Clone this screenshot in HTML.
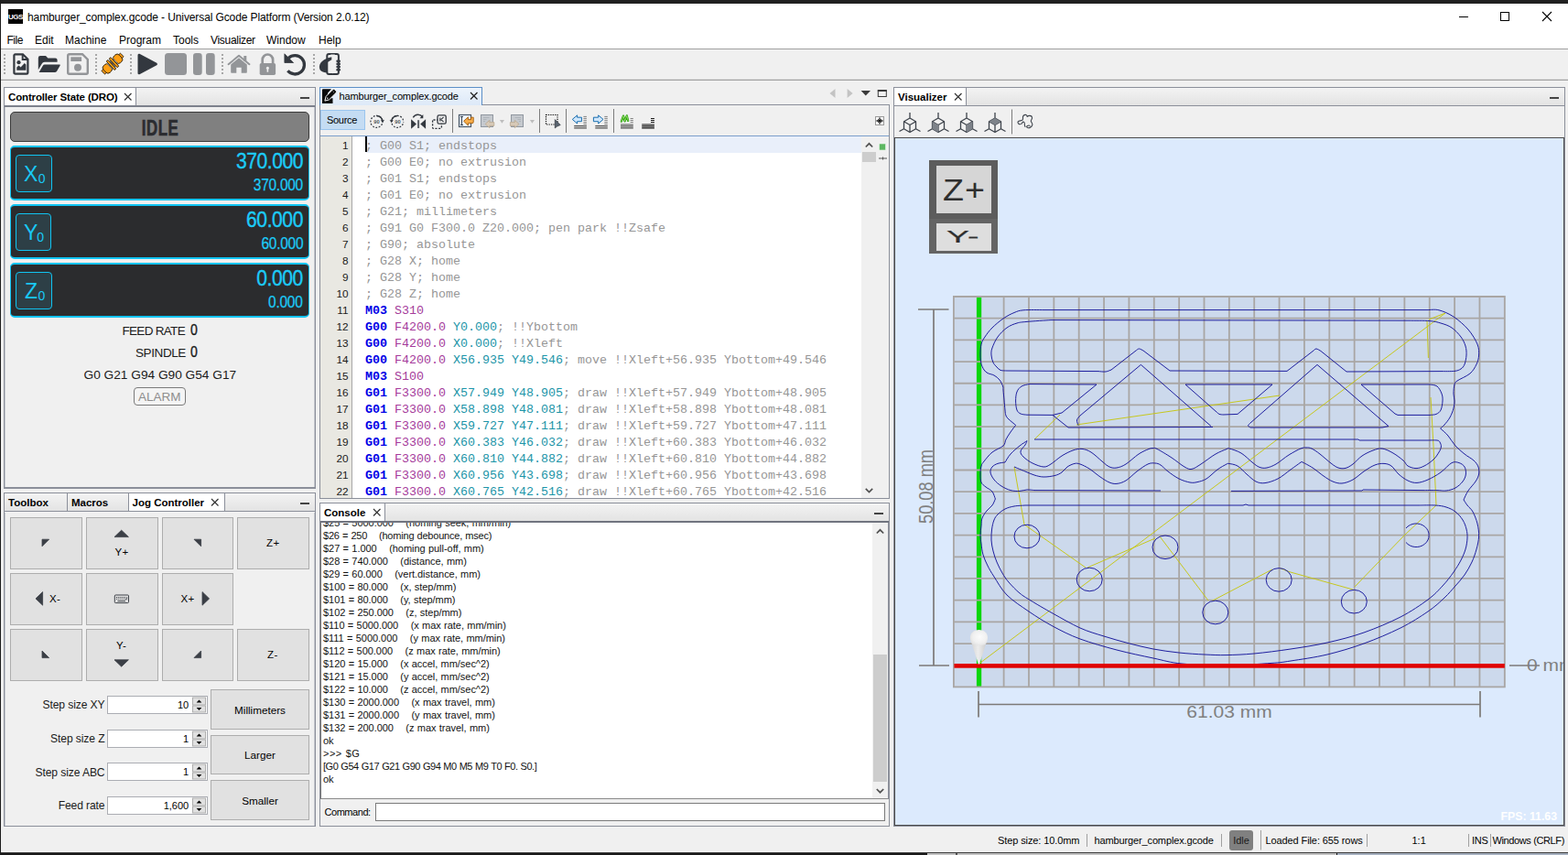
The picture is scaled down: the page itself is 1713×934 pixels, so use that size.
<!DOCTYPE html>
<html lang="en">
<head>
<meta charset="utf-8">
<title>hamburger_complex.gcode - Universal Gcode Platform (Version 2.0.12)</title>
<style>
*{box-sizing:border-box;margin:0;padding:0}
html,body{width:1713px;height:934px;overflow:hidden;background:#f0f0f0}
body{position:relative;font-family:"Liberation Sans",sans-serif;font-size:12px;color:#000}
.a{position:absolute}
.t{position:absolute;white-space:pre;line-height:1}
svg{position:absolute;overflow:visible}
.ui{font-family:"Liberation Sans",sans-serif;font-size:12px}
.bold{font-weight:bold}
.panel{position:absolute;border:1px solid #8b8f9a}
.tabstrip{position:absolute;background:linear-gradient(#f3f3f3,#e3e3e3);border-bottom:2px solid #7d818c}
.tab{position:absolute;top:0;bottom:0;background:#fff;border-right:1px solid #8b8f9a}
.tabi{position:absolute;top:0;bottom:0;border-right:1px solid #8b8f9a}
.btn{position:absolute;background:#e1e1e1;border:1px solid #adadad}
.spin{position:absolute;background:#fff;border:1px solid #abadb3}
.mono{font-family:"Liberation Mono",monospace;font-size:13.33px}
.c{color:#969696}.g{color:#0000e6;font-weight:bold}.f{color:#a53b9b}.x{color:#1c95a8}
.ln{position:absolute;left:0;width:33px;text-align:right;font-size:13px;color:#1a1a1a}
</style>
</head>
<body>
<!-- window chrome -->
<div class="a" style="left:0;top:0;width:1713px;height:4px;background:#212121"></div>
<div class="a" style="left:0;top:931px;width:1713px;height:3px;background:#1a1a1a"></div>
<div class="a" style="left:1013px;top:932px;width:447px;height:2px;background:#c2c2c2"></div>
<div class="a" style="left:1044px;top:932px;width:2px;height:2px;background:#555"></div>
<div class="a" style="left:1461px;top:932px;width:252px;height:2px;background:#a6b0c0"></div>
<div class="a" style="left:0;top:931px;width:1713px;height:1px;background:#3c3c3c"></div>
<div class="a" style="left:0;top:0;width:1px;height:934px;background:#1c1c1c"></div>
<div class="a" style="left:1px;top:4px;width:1712px;height:49px;background:#fff"></div>
<div class="a" style="left:1px;top:53px;width:1712px;height:1px;background:#a0a0a0"></div>
<div class="a" style="left:1px;top:86px;width:1712px;height:1px;background:#dcdcdc"></div>
<div class="a" style="left:1px;top:87px;width:1712px;height:1px;background:#a0a0a0"></div>
<!-- app icon -->
<div class="a" style="left:9px;top:10px;width:16px;height:16px;background:#000"></div>
<div class="t bold" style="left:9px;top:14.500px;width:16px;text-align:center;font-size:8px;color:#fff;letter-spacing:-0.500px">UGS</div>
<div class="t" id="title" style="left:30px;top:13px;font-size:12px;letter-spacing:-0.11px">hamburger_complex.gcode - Universal Gcode Platform (Version 2.0.12)</div>
<!-- window buttons -->
<svg style="left:1590px;top:10px" width="120" height="20" viewBox="0 0 120 20">
<path d="M4 8.5h10" stroke="#000" stroke-width="1" fill="none"/>
<rect x="49.5" y="3.5" width="9" height="9" stroke="#000" stroke-width="1" fill="none"/>
<path d="M95 3l10 10M105 3l-10 10" stroke="#000" stroke-width="1.1" fill="none"/>
</svg>
<!-- menu -->
<div class="t" style="left:7.500px;top:38px;font-size:12px;letter-spacing:-0.500px" id="m1">File</div>
<div class="t" style="left:38px;top:38px;font-size:12px" id="m2">Edit</div>
<div class="t" style="left:71px;top:38px;font-size:12px" id="m3">Machine</div>
<div class="t" style="left:130px;top:38px;font-size:12px" id="m4">Program</div>
<div class="t" style="left:189px;top:38px;font-size:12px" id="m5">Tools</div>
<div class="t" style="left:230px;top:38px;font-size:12px;letter-spacing:-0.3px" id="m6">Visualizer</div>
<div class="t" style="left:291px;top:38px;font-size:12px" id="m7">Window</div>
<div class="t" style="left:348px;top:38px;font-size:12px" id="m8">Help</div>
<!-- main toolbar -->
<svg style="left:0;top:54px" width="400" height="33" viewBox="0 54 400 33">
<defs><g id="hd"><rect x="0" y="59" width="2" height="2"/><rect x="0" y="63" width="2" height="2"/><rect x="0" y="67" width="2" height="2"/><rect x="0" y="71" width="2" height="2"/><rect x="0" y="75" width="2" height="2"/><rect x="0" y="79" width="2" height="2"/></g></defs>
<use href="#hd" x="4" fill="#a8a8a8"/><use href="#hd" x="104" fill="#a8a8a8"/><use href="#hd" x="142" fill="#a8a8a8"/><use href="#hd" x="242" fill="#a8a8a8"/><use href="#hd" x="342" fill="#a8a8a8"/>
<!-- file image -->
<g transform="translate(14.3 58.2)" fill="#33383f" stroke="none">
<path d="M3.3 1.1h8.2l5.5 5.5v14.6a1.3 1.3 0 0 1-1.3 1.3H3.3A1.3 1.3 0 0 1 2 21.2V2.4a1.3 1.3 0 0 1 1.3-1.3z" fill="none" stroke="#33383f" stroke-width="2.2" transform="translate(-0.9 0)"/>
<path d="M10.4 1.2v5.6h5.6" fill="none" stroke="#33383f" stroke-width="2"/>
<circle cx="6.2" cy="10" r="2.1"/>
<path d="M4 18.6v-3.2l2.2-2.2 2.1 2.1 4.2-4.6 1.6 1.6v6.3z"/>
</g>
<!-- folder open -->
<g transform="translate(41.8 61)" fill="#33383f">
<path d="M2.2 0h6l2.4 2.4h8a2.2 2.2 0 0 1 2.2 2.2v2.2H6.9a3.3 3.3 0 0 0-2.9 1.7L0 15.3V2.2A2.2 2.2 0 0 1 2.200 0z"/>
<path d="M23.9 10.6l-3.600 6.100a2.800 2.800 0 0 1-2.400 1.400H0.800l4.200-7.400a2.400 2.400 0 0 1 2.100-1.200h16a0.800 0.800 0 0 1 0.800 1.100z"/>
</g>
<!-- save (disabled) -->
<g transform="translate(73 58)" fill="#939598">
<path d="M2.700 1.200h14.300l5.800 5.800v14.300a1.500 1.500 0 0 1-1.500 1.500H2.700a1.500 1.500 0 0 1-1.500-1.500V2.700a1.500 1.500 0 0 1 1.500-1.500z" fill="none" stroke="#939598" stroke-width="2.400"/>
<rect x="4.300" y="4.300" width="11.800" height="4.700"/>
<circle cx="12" cy="15.800" r="4"/>
</g>
<!-- connect (orange plug) -->
<g transform="translate(123 69.600) rotate(-43)">
<g fill="#ff9f14" stroke="#2a2010" stroke-width="0.900" stroke-linejoin="round">
<rect x="-14.100" y="-2.600" width="5.500" height="5.200" rx="0.500"/>
<rect x="8.600" y="-2.600" width="5.500" height="5.200" rx="0.500"/>
<rect x="-11.800" y="-5.100" width="8" height="10.200" rx="3.200"/>
<rect x="3.800" y="-5.100" width="8" height="10.200" rx="3.200"/>
<rect x="-4.600" y="-4.300" width="9.200" height="8.600" fill="#4a4a4a" stroke="none"/>
<path d="M-4.100 -4.600v9.200M0 -5v10M4.100 -4.600v9.200" stroke="#f0f0f0" stroke-width="0.900" stroke-dasharray="1 0.800"/>
<rect x="-3.300" y="-6.700" width="2.500" height="13.400" rx="1.250"/>
<rect x="0.800" y="-6.700" width="2.500" height="13.400" rx="1.250"/>
</g>
<path d="M-9.300 -2.200v4.400M9.300 -2.200v4.400" stroke="#ff9f14" stroke-width="1.600"/>
</g>
<!-- play -->
<path d="M151.800 60v20l18.800-10z" fill="#33383f" stroke="#33383f" stroke-width="2.600" stroke-linejoin="round"/>
<!-- stop -->
<rect x="180" y="58" width="24" height="24" rx="3.500" fill="#939598"/>
<!-- pause -->
<rect x="211" y="58" width="9.700" height="24" rx="3.200" fill="#939598"/>
<rect x="225" y="58" width="9.700" height="24" rx="3.200" fill="#939598"/>
<!-- home -->
<g transform="translate(249 60)" fill="#939598">
<path d="M12 3.200L3.200 10.500V19a0.800 0.800 0 0 0 0.800 0.800h5.300v-6h5.400v6H20a0.800 0.800 0 0 0 0.800-0.800v-8.500z"/>
<path d="M0.600 10.200L12 0.800l11.400 9.400" fill="none" stroke="#939598" stroke-width="2" stroke-linecap="round" stroke-linejoin="round"/>
<rect x="17.300" y="1" width="3" height="6"/>
</g>
<!-- lock -->
<g transform="translate(283.700 58)" fill="#939598">
<path d="M3 11.500V7.200a5.700 5.700 0 0 1 11.400 0v4.300" fill="none" stroke="#939598" stroke-width="2.700"/>
<rect x="0" y="11" width="17.400" height="13" rx="1.800"/>
<circle cx="8.700" cy="16.300" r="1.500" fill="#f0f0f0"/><rect x="7.900" y="16.300" width="1.600" height="4.400" fill="#f0f0f0"/>
</g>
<!-- reset -->
<g transform="translate(310.600 58)">
<path d="M4.600 5.400A10.200 10.200 0 1 1 3.800 19.300" fill="none" stroke="#33383f" stroke-width="3.300"/>
<path d="M0.300 0.800v9.700h9.700z" fill="#33383f" stroke="#33383f" stroke-width="0.800" stroke-linejoin="round"/>
</g>
<!-- pendant (phone in hand) -->
<g transform="translate(348.700 58)" fill="#33383f">
<rect x="8.600" y="1.100" width="12.600" height="21.800" rx="2" fill="none" stroke="#33383f" stroke-width="2"/>
<rect x="12.500" y="1.500" width="4.600" height="1" fill="#f0f0f0"/>
<circle cx="14.900" cy="21.600" r="0.700" fill="#f0f0f0"/>
<path d="M13.600 4.200C9 5 1 8 0.200 14.500 0 19 3 21.300 8.300 21.300V10.600l5.300-3.400z"/>
<rect x="18.600" y="7.400" width="4.700" height="2.600" rx="1.300"/><rect x="18.600" y="10.600" width="4.700" height="2.600" rx="1.300"/><rect x="18.600" y="13.800" width="4.700" height="2.600" rx="1.300"/><rect x="18.600" y="17" width="4.700" height="2.600" rx="1.300"/>
</g>
</svg>
<!-- Controller State (DRO) panel -->
<div class="panel" style="left:4px;top:95px;width:341px;height:439px"></div>
<div class="a" style="left:5px;top:117px;width:1px;height:415px;background:#c4c7ce"></div>
<div class="a" style="left:343px;top:117px;width:1px;height:415px;background:#c4c7ce"></div>
<div class="a" style="left:5px;top:532px;width:339px;height:1px;background:#8b8f9a"></div>
<div class="tabstrip" style="left:5px;top:96px;width:339px;height:21px">
 <div class="tab" style="left:0;width:144px"></div>
</div>
<div class="t bold" id="t_dro" style="left:9px;top:101px;font-size:11.500px;letter-spacing:-0.150px">Controller State (DRO)</div>
<svg style="left:135px;top:101px" width="10" height="10"><path d="M1 1l7.500 7.500M8.500 1l-7.500 7.500" stroke="#333" stroke-width="1.200" fill="none"/></svg>
<div class="a" style="left:328px;top:106px;width:10px;height:2px;background:#444"></div>
<!-- state -->
<div class="a" style="left:11px;top:122px;width:327px;height:33px;background:#808080;border:1px solid #3a3a3a;border-radius:5px"></div>
<div class="t bold" id="idle" style="left:125px;top:128px;width:100px;text-align:center;font-size:24px;color:#2b2c30;transform:scaleX(0.700);letter-spacing:0.800px;-webkit-text-stroke:0.700px #2b2c30">IDLE</div>
<!-- axes -->
<div class="a" style="left:11px;top:159px;width:327px;height:60px;background:#2b2c2e;border:1px solid #10c4f2;border-top-width:2px;border-bottom-width:2px;border-radius:5px"></div>
<div class="a" style="left:11px;top:223px;width:327px;height:60px;background:#2b2c2e;border:1px solid #10c4f2;border-top-width:2px;border-bottom-width:2px;border-radius:5px"></div>
<div class="a" style="left:11px;top:287px;width:327px;height:60px;background:#2b2c2e;border:1px solid #10c4f2;border-top-width:2px;border-bottom-width:2px;border-radius:5px"></div>
<div class="a" style="left:17px;top:169px;width:40px;height:41px;background:#2d3f46;border:1px solid #10c4f2;border-radius:4px"></div>
<div class="a" style="left:17px;top:233px;width:39px;height:41px;background:#2d3f46;border:1px solid #10c4f2;border-radius:4px"></div>
<div class="a" style="left:17px;top:297px;width:40px;height:41px;background:#2d3f46;border:1px solid #10c4f2;border-radius:4px"></div>
<div class="t" style="left:26px;top:179px;font-size:23px;color:#19c8f5">X<span style="font-size:14px;position:relative;top:2px;left:0.500px">0</span></div>
<div class="t" style="left:26px;top:243px;font-size:23px;color:#19c8f5">Y<span style="font-size:14px;position:relative;top:2px;left:-1px">0</span></div>
<div class="t" style="left:27px;top:307px;font-size:23px;color:#19c8f5">Z<span style="font-size:14px;position:relative;top:2px;left:0.500px">0</span></div>
<div class="t seg" id="bx" style="right:1382px;top:164px;font-size:24.500px;color:#1ccbf8;-webkit-text-stroke:0.400px #1ccbf8;transform:scaleX(0.860);transform-origin:right center;letter-spacing:-0.500px">370.000</div>
<div class="t seg" id="sx" style="right:1382px;top:193px;font-size:18px;color:#1ccbf8;-webkit-text-stroke:0.250px #1ccbf8;transform:scaleX(0.860);transform-origin:right center;letter-spacing:-0.300px">370.000</div>
<div class="t seg" style="right:1382px;top:228px;font-size:24.500px;color:#1ccbf8;-webkit-text-stroke:0.400px #1ccbf8;transform:scaleX(0.860);transform-origin:right center;letter-spacing:-0.500px">60.000</div>
<div class="t seg" style="right:1382px;top:257px;font-size:18px;color:#1ccbf8;-webkit-text-stroke:0.250px #1ccbf8;transform:scaleX(0.860);transform-origin:right center;letter-spacing:-0.300px">60.000</div>
<div class="t seg" style="right:1382px;top:292px;font-size:24.500px;color:#1ccbf8;-webkit-text-stroke:0.400px #1ccbf8;transform:scaleX(0.860);transform-origin:right center;letter-spacing:-0.500px">0.000</div>
<div class="t seg" style="right:1382px;top:321px;font-size:18px;color:#1ccbf8;-webkit-text-stroke:0.250px #1ccbf8;transform:scaleX(0.860);transform-origin:right center;letter-spacing:-0.300px">0.000</div>
<!-- feed / spindle -->
<div class="t" id="feed" style="left:133.500px;top:355px;font-size:13.500px;letter-spacing:-0.700px;color:#1a1a1a">FEED RATE</div>
<div class="t" style="left:207.500px;top:353px;font-size:16px;color:#1a1a1a;-webkit-text-stroke:0.350px #1a1a1a;transform:scaleX(0.880);transform-origin:left center">0</div>
<div class="t" id="spin" style="left:148px;top:379px;font-size:13.500px;letter-spacing:-0.400px;color:#1a1a1a">SPINDLE</div>
<div class="t" style="left:207.500px;top:377px;font-size:16px;color:#1a1a1a;-webkit-text-stroke:0.350px #1a1a1a;transform:scaleX(0.880);transform-origin:left center">0</div>
<div class="t" id="gst" style="left:91.500px;top:403px;font-size:13.700px;color:#1a1a1a">G0 G21 G94 G90 G54 G17</div>
<div class="a" style="left:146px;top:423px;width:57px;height:20px;border:1px solid #7a7a7a;border-radius:4px;background:#f4f4f4"></div>
<div class="t" id="alarm" style="left:151px;top:426.500px;font-size:13.500px;color:#8e8e8e">ALARM</div>
<!-- Jog controller panel -->
<div class="panel" style="left:4px;top:538px;width:341px;height:365px"></div>
<div class="a" style="left:5px;top:560px;width:1px;height:342px;background:#c4c7ce"></div>
<div class="a" style="left:343px;top:560px;width:1px;height:342px;background:#c4c7ce"></div>
<div class="tabstrip" style="left:5px;top:539px;width:339px;height:21px;border-bottom:1px solid #8b8f9a;height:20px">
 <div class="tabi" style="left:0;width:69px"></div>
 <div class="tabi" style="left:69px;width:67px"></div>
 <div class="tab" style="left:136px;width:105px"></div>
</div>
<div class="t bold" id="t_tb" style="left:9px;top:544px;font-size:11.500px">Toolbox</div>
<div class="t bold" id="t_mc" style="left:78px;top:544px;font-size:11.500px">Macros</div>
<div class="t bold" id="t_jog" style="left:144.500px;top:544px;font-size:11.500px">Jog Controller</div>
<svg style="left:230px;top:544px" width="10" height="10"><path d="M1 1l7.500 7.500M8.500 1l-7.500 7.500" stroke="#333" stroke-width="1.200" fill="none"/></svg>
<div class="a" style="left:328px;top:549px;width:10px;height:2px;background:#444"></div>
<!-- jog buttons -->
<div class="btn" style="left:11px;top:565px;width:79px;height:57px"></div>
<div class="btn" style="left:94px;top:565px;width:79px;height:57px"></div>
<div class="btn" style="left:177px;top:565px;width:78px;height:57px"></div>
<div class="btn" style="left:259px;top:565px;width:79px;height:57px"></div>
<div class="btn" style="left:11px;top:626px;width:79px;height:57px"></div>
<div class="btn" style="left:94px;top:626px;width:79px;height:57px"></div>
<div class="btn" style="left:177px;top:626px;width:78px;height:57px"></div>
<div class="btn" style="left:11px;top:687px;width:79px;height:57px"></div>
<div class="btn" style="left:94px;top:687px;width:79px;height:57px"></div>
<div class="btn" style="left:177px;top:687px;width:78px;height:57px"></div>
<div class="btn" style="left:259px;top:687px;width:79px;height:57px"></div>
<svg style="left:0;top:560px" width="345" height="190" viewBox="0 560 345 190">
<g fill="#3b3f46" stroke="#3b3f46" stroke-width="0.800" stroke-linejoin="round">
<path d="M46 589.200h7.600l-7.600 7.600z"/>
<path d="M125 586.600l7.700-7.400 7.700 7.400z"/>
<path d="M212 589.200h7.600v7.600z"/>
<path d="M46.600 646.600v14.600l-7.600-7.300z"/>
<path d="M221 646.600v14.600l7.600-7.300z"/>
<path d="M46 711v7.600h7.600z"/>
<path d="M125 720.800l7.700 7.400 7.700-7.400z"/>
<path d="M219.600 711v7.600h-7.600z"/>
</g>
<!-- keyboard icon -->
<g fill="none" stroke="#3b3f46">
<rect x="125.300" y="650" width="15.200" height="8.600" rx="1" stroke-width="1"/>
<path d="M127 652.500h10M127 654.300h10" stroke-width="1" stroke-dasharray="1 0.800"/>
<path d="M128.500 656.600h8.500" stroke-width="1"/><path d="M138.600 652v2.700h-1.500" stroke-width="0.800"/>
</g>
</svg>
<div class="t" style="left:125.500px;top:597.500px;font-size:11.500px;letter-spacing:0.400px">Y+</div>
<div class="t" style="left:291px;top:587.500px;font-size:11.500px;letter-spacing:0.400px">Z+</div>
<div class="t" style="left:54px;top:648.500px;font-size:11.500px;letter-spacing:0.400px">X-</div>
<div class="t" style="left:197.500px;top:648.500px;font-size:11.500px;letter-spacing:0.400px">X+</div>
<div class="t" style="left:127px;top:699.500px;font-size:11.500px;letter-spacing:0.400px">Y-</div>
<div class="t" style="left:292px;top:709.500px;font-size:11.500px;letter-spacing:0.400px">Z-</div>
<!-- step sizes -->
<div class="t" id="ssxy" style="right:1598.500px;top:763.500px;font-size:12.100px;letter-spacing:-0.100px;color:#1a1a1a">Step size XY</div>
<div class="t" id="ssz" style="right:1598.500px;top:800.500px;font-size:12.100px;letter-spacing:-0.100px;color:#1a1a1a">Step size Z</div>
<div class="t" id="ssabc" style="right:1598.500px;top:837.500px;font-size:12.100px;letter-spacing:-0.100px;color:#1a1a1a">Step size ABC</div>
<div class="t" id="fr" style="right:1598.500px;top:873.500px;font-size:12.100px;letter-spacing:-0.100px;color:#1a1a1a">Feed rate</div>
<div class="spin" style="left:117px;top:760px;width:110px;height:20px"></div>
<div class="spin" style="left:117px;top:797px;width:110px;height:20px"></div>
<div class="spin" style="left:117px;top:833px;width:110px;height:20px"></div>
<div class="spin" style="left:117px;top:870px;width:110px;height:20px"></div>
<div class="t" style="right:1506.800px;top:764.500px;font-size:11px">10</div>
<div class="t" style="right:1506.800px;top:801.500px;font-size:11px">1</div>
<div class="t" style="right:1506.800px;top:837.500px;font-size:11px">1</div>
<div class="t" style="right:1506.800px;top:874.500px;font-size:11px">1,600</div>
<svg style="left:209px;top:755px" width="20" height="140" viewBox="209 755 20 140">
<defs><g id="sp"><rect x="210.500" y="1.500" width="14" height="8" fill="#e1e1e1" stroke="#adadad"/><rect x="210.500" y="10.500" width="14" height="7" fill="#e1e1e1" stroke="#adadad"/><path d="M214.600 7l2.900-3 2.900 3z" fill="#000"/><path d="M214.600 12.500l2.900 3 2.900-3z" fill="#000"/></g></defs>
<use href="#sp" y="760.500"/><use href="#sp" y="797.500"/><use href="#sp" y="833.500"/><use href="#sp" y="870.500"/>
</svg>
<div class="btn" style="left:230px;top:753px;width:108px;height:44px"></div>
<div class="btn" style="left:230px;top:803px;width:108px;height:43px"></div>
<div class="btn" style="left:230px;top:852px;width:108px;height:44px"></div>
<div class="t" id="mm" style="left:230px;width:108px;text-align:center;top:770px;font-size:11.700px;letter-spacing:0">Millimeters</div>
<div class="t" id="lg" style="left:230px;width:108px;text-align:center;top:819px;font-size:11.700px;letter-spacing:0">Larger</div>
<div class="t" id="sm" style="left:230px;width:108px;text-align:center;top:869px;font-size:11.700px;letter-spacing:0">Smaller</div>
<!-- Editor panel -->
<div class="a" style="left:349px;top:114px;width:623px;height:431px;border:1px solid #8b8f9a;border-top-color:#8b8f9a"></div>
<div class="a" style="left:349px;top:95px;width:178px;height:20px;background:linear-gradient(#edf4fc,#dde9f8);border:1px solid #5c8fc7;border-bottom:none"></div>
<svg style="left:352px;top:97px" width="16" height="16" viewBox="0 0 16 16"><path d="M0 1.200a1 1 0 0 1 1-1h9l-4 4.500v5.500h5.500v5.800H0z" fill="#0a0a0a"/><path d="M11.400 0.900a1.700 1.700 0 0 1 2.400 0l1.200 1.200a1.700 1.700 0 0 1 0 2.400L7.600 11.900l-4.700 1.200 1.200-4.700z" fill="#0a0a0a" stroke="#fff" stroke-width="1" stroke-linejoin="round"/><circle cx="5.800" cy="10.200" r="0.700" fill="#fff"/><path d="M11.800 2.800l0.800 0.800" stroke="#fff" stroke-width="0.800"/></svg>
<div class="t" id="t_ed" style="left:370.500px;top:100px;font-size:11px;letter-spacing:-0.130px">hamburger_complex.gcode</div>
<svg style="left:513px;top:100px" width="10" height="10"><path d="M1 1l7.500 7.500M8.500 1l-7.500 7.500" stroke="#222" stroke-width="1.300" fill="none"/></svg>
<svg style="left:900px;top:95px" width="72" height="16" viewBox="900 95 72 16"><path d="M912.500 97v10l-6-5z" fill="#c3c3c3"/><path d="M925.600 97v10l6-5z" fill="#c3c3c3"/><path d="M940.600 99h10.400l-5.200 5.500z" fill="#3a3a3a"/><rect x="959.300" y="99" width="9" height="6.500" fill="none" stroke="#3a3a3a" stroke-width="1"/><rect x="958.800" y="98" width="10" height="2" fill="#3a3a3a"/></svg>
<div class="a" style="left:350px;top:120px;width:49px;height:22px;background:#c4dcf3;border:1px solid #9ac5ee"></div>
<div class="t" id="src" style="left:357px;top:125.500px;font-size:11px;letter-spacing:-0.300px">Source</div>
<div class="a" style="left:350px;top:148px;width:621px;height:1px;background:#7c9fcb"></div>
<div class="a" style="left:350px;top:149px;width:34px;height:395px;background:#e9e8e2"></div>
<div class="a" style="left:384px;top:149px;width:1px;height:395px;background:#a8a8a8"></div>
<div class="a" style="left:385px;top:149px;width:556px;height:395px;background:#fff"></div>
<div class="a" style="left:400px;top:149px;width:541px;height:18px;background:#e9effa"></div>
<div class="a" style="left:399px;top:149px;width:2px;height:17px;background:#000"></div>
<div class="a" style="left:350px;top:150px;width:34px;height:394px;overflow:hidden;font-size:11.800px;line-height:18px;text-align:right;padding-right:3.400px;color:#1a1a1a">1<br>2<br>3<br>4<br>5<br>6<br>7<br>8<br>9<br>10<br>11<br>12<br>13<br>14<br>15<br>16<br>17<br>18<br>19<br>20<br>21<br>22</div>
<pre class="a mono" id="code" style="left:399px;top:151px;width:542px;height:393px;overflow:hidden;line-height:18px"><span class="c">; G00 S1; endstops</span>
<span class="c">; G00 E0; no extrusion</span>
<span class="c">; G01 S1; endstops</span>
<span class="c">; G01 E0; no extrusion</span>
<span class="c">; G21; millimeters</span>
<span class="c">; G91 G0 F300.0 Z20.000; pen park !!Zsafe</span>
<span class="c">; G90; absolute</span>
<span class="c">; G28 X; home</span>
<span class="c">; G28 Y; home</span>
<span class="c">; G28 Z; home</span>
<span class="g">M03</span> <span class="f">S310</span>
<span class="g">G00</span> <span class="f">F4200.0</span> <span class="x">Y0.000</span><span class="c">; !!Ybottom</span>
<span class="g">G00</span> <span class="f">F4200.0</span> <span class="x">X0.000</span><span class="c">; !!Xleft</span>
<span class="g">G00</span> <span class="f">F4200.0</span> <span class="x">X56.935</span> <span class="x">Y49.546</span><span class="c">; move !!Xleft+56.935 Ybottom+49.546</span>
<span class="g">M03</span> <span class="f">S100</span>
<span class="g">G01</span> <span class="f">F3300.0</span> <span class="x">X57.949</span> <span class="x">Y48.905</span><span class="c">; draw !!Xleft+57.949 Ybottom+48.905</span>
<span class="g">G01</span> <span class="f">F3300.0</span> <span class="x">X58.898</span> <span class="x">Y48.081</span><span class="c">; draw !!Xleft+58.898 Ybottom+48.081</span>
<span class="g">G01</span> <span class="f">F3300.0</span> <span class="x">X59.727</span> <span class="x">Y47.111</span><span class="c">; draw !!Xleft+59.727 Ybottom+47.111</span>
<span class="g">G01</span> <span class="f">F3300.0</span> <span class="x">X60.383</span> <span class="x">Y46.032</span><span class="c">; draw !!Xleft+60.383 Ybottom+46.032</span>
<span class="g">G01</span> <span class="f">F3300.0</span> <span class="x">X60.810</span> <span class="x">Y44.882</span><span class="c">; draw !!Xleft+60.810 Ybottom+44.882</span>
<span class="g">G01</span> <span class="f">F3300.0</span> <span class="x">X60.956</span> <span class="x">Y43.698</span><span class="c">; draw !!Xleft+60.956 Ybottom+43.698</span>
<span class="g">G01</span> <span class="f">F3300.0</span> <span class="x">X60.765</span> <span class="x">Y42.516</span><span class="c">; draw !!Xleft+60.765 Ybottom+42.516</span></pre>
<div class="a" style="left:942px;top:166px;width:15px;height:11px;background:#cdcdcd"></div>
<svg style="left:941px;top:149px" width="31" height="395" viewBox="941 149 31 395"><path d="M945.800 160.500l3.700-3.700 3.700 3.700" fill="none" stroke="#505050" stroke-width="1.700"/><path d="M945.800 533.800l3.700 3.700 3.700-3.700" fill="none" stroke="#505050" stroke-width="1.700"/><rect x="960.500" y="157" width="7" height="7" fill="#5db761" stroke="#e8f5e8" stroke-width="0.600"/><path d="M960 173h9M964.500 171.500v3" stroke="#555" stroke-width="1"/></svg>
<!-- editor toolbar icons -->
<svg style="left:400px;top:116px" width="572" height="32" viewBox="400 116 572 32">
<g fill="none" stroke="#33383f" stroke-width="1.300">
<circle cx="411.400" cy="132.900" r="6.500" stroke-dasharray="1.800 1.600" stroke-dashoffset="1" stroke-width="1.200"/>
<path d="M411.400 126.400a6.500 6.500 0 0 1 6.500 6.500" stroke-width="1.500"/>
<path d="M416.200 131.400l1.800 2.300 1.600-2.400z" fill="#33383f" stroke-width="0.400"/>
<circle cx="434.200" cy="132.900" r="6.500" stroke-dasharray="1.800 1.600" stroke-dashoffset="1" stroke-width="1.200"/>
<path d="M434.200 126.400a6.500 6.500 0 0 0-6.500 6.500" stroke-width="1.500"/>
<path d="M429.400 131.400l-1.800 2.300-1.600-2.400z" fill="#33383f" stroke-width="0.400"/>
</g>
<text x="411.400" y="135" font-family="Liberation Sans, sans-serif" font-size="5.800" font-weight="bold" text-anchor="middle" fill="#555a60">90</text>
<text x="434.400" y="135" font-family="Liberation Sans, sans-serif" font-size="5.800" font-weight="bold" text-anchor="middle" fill="#555a60">90</text>
<!-- mirror -->
<path d="M449.100 130.300v10.500l5.900-5.250zM465.100 130.300v10.500l-5.900-5.250z" fill="#33383f"/>
<rect x="456.100" y="131.200" width="2" height="8.800" fill="#5a5f66"/>
<path d="M451.300 128.300a6.300 6.300 0 0 1 10.300-0.600" fill="none" stroke="#33383f" stroke-width="1.400"/>
<path d="M462.300 125v4.200h-3.800z" fill="#33383f"/>
<!-- move/copy -->
<rect x="472.600" y="131" width="9.800" height="9.300" rx="0.800" fill="none" stroke="#33383f" stroke-width="1.300" stroke-dasharray="2.200 1.500"/>
<rect x="478" y="125.800" width="9.200" height="9.300" rx="1.600" fill="#f0f0f0" stroke="#33383f" stroke-width="1.300"/>
<path d="M480.800 128.400v4.200M481.600 130.600l3-2.600M481.600 130.600l3 2.400" stroke="#33383f" stroke-width="1.100" fill="none"/>
<!-- separators -->
<path d="M494.500 119v26M589.500 119v26M618.500 119v26M670.500 119v26" stroke="#7c7c7c" stroke-width="1"/>
<!-- last edit -->
<rect x="501.500" y="125.500" width="13" height="13" fill="#eef5fd" stroke="#4a5868" stroke-width="1.200"/>
<path d="M503 127.500h3M503 136.500h3M504.500 127.500v9" stroke="#3a4654" stroke-width="1" fill="none"/>
<path d="M506.600 132.300l4.800-4.400v2.700h3.100v-2.400h2.700v5.200a1.200 1.200 0 0 1-1.200 1.200h-4.600v2.400z" fill="#f7ad4a" stroke="#a35a08" stroke-width="0.900" stroke-linejoin="round"/>
<!-- back (disabled) -->
<rect x="525.500" y="125.500" width="13" height="13" fill="#c5c9ce" stroke="#9097a0" stroke-width="1"/>
<path d="M528 128.500h6.500M528 130.500h3.500M528 132.500h2" stroke="#a8aeb5" stroke-width="0.800"/>
<path d="M530.200 135.500l4.600-4.200v2.300h5v3.800h-5v2.300z" fill="#d8cab8" stroke="#b9a890" stroke-width="0.800" stroke-linejoin="round"/>
<path d="M545.900 131h5.100l-2.550 3.700z" fill="#bdbdbd"/>
<!-- forward (disabled) -->
<rect x="558.500" y="125.500" width="13" height="13" fill="#c5c9ce" stroke="#9097a0" stroke-width="1"/>
<path d="M562.500 128.500h6.500M565.500 130.500h3.500M567 132.500h2" stroke="#a8aeb5" stroke-width="0.800"/>
<path d="M567 135.500l-4.600-4.200v2.300h-5v3.800h5v2.300z" fill="#d8cab8" stroke="#b9a890" stroke-width="0.800" stroke-linejoin="round"/>
<path d="M578.900 131h5.100l-2.550 3.700z" fill="#bdbdbd"/>
<!-- rect selection -->
<rect x="596.500" y="125.500" width="12.500" height="10.500" fill="none" stroke="#000" stroke-width="1.200" stroke-dasharray="1.200 1.200"/>
<path d="M606.300 130.600v9.300l2.300-1.800 3.600-1.600z" fill="#5a6470" stroke="#2e343b" stroke-width="0.700" stroke-linejoin="round"/>
<!-- shift left -->
<path d="M625.300 130.400l5.300-4.500v2.300h4.800v4.500h-4.800v2.300z" fill="#cfe6fb" stroke="#1a6fb0" stroke-width="1" stroke-linejoin="round"/>
<path d="M637.400 127.400h3.500M637.400 129.400h3.500M637.400 131.400h3.500M637.400 133.500h3.500M637.400 135.500h3.500" stroke="#808080" stroke-width="1"/>
<path d="M627.200 137.700h13.700M627.200 139.800h13.700" stroke="#505050" stroke-width="1.200"/>
<!-- shift right -->
<path d="M659 130.400l-5.300-4.500v2.300h-5.300v4.500h5.300v2.300z" fill="#cfe6fb" stroke="#1a6fb0" stroke-width="1" stroke-linejoin="round"/>
<path d="M660.300 127.400h3.500M660.300 129.400h3.500M660.300 131.400h3.500M660.300 133.500h3.500M660.300 135.500h3.500" stroke="#808080" stroke-width="1"/>
<path d="M650.300 137.700h13.500M650.300 139.800h13.500" stroke="#505050" stroke-width="1.200"/>
<!-- comment (green N) -->
<path d="M678.800 132.600l2.200-6 1.600 5.800 2.200-6 1.400 5.600" fill="none" stroke="#1f9a00" stroke-width="2.200" stroke-linecap="round" stroke-linejoin="round"/>
<path d="M678.800 132.600l2.200-6 1.600 5.800 2.200-6 1.400 5.600" fill="none" stroke="#b5f08a" stroke-width="0.700" stroke-linecap="round" stroke-linejoin="round"/>
<path d="M688.600 129.500h3.200M688.600 131.500h3.200M688.600 133.500h3.200" stroke="#808080" stroke-width="1"/>
<path d="M678 136h13.800M678 137.900h13.800M678 139.900h13.800" stroke="#505050" stroke-width="1.100"/>
<!-- uncomment -->
<path d="M711 129.500h3.900M711 131.500h3.900M711 133.500h3.900" stroke="#111" stroke-width="1.100"/>
<path d="M701.200 136h13.700M701.200 137.900h13.700M701.200 139.900h13.700" stroke="#111" stroke-width="1.100"/>
<!-- right icon -->
<rect x="956.500" y="127.500" width="9" height="9" fill="#fafafa" stroke="#9a9a9a" stroke-width="1"/>
<path d="M961 128.500v7M957.500 132h7" stroke="#111" stroke-width="1.300"/>
<path d="M959 130l4 4M963 130l-4 4" stroke="#111" stroke-width="0.700"/>
</svg>
<!-- Console panel -->
<div class="panel" style="left:349px;top:549px;width:623px;height:354px"></div>
<div class="tabstrip" style="left:350px;top:550px;width:621px;height:21px;border-bottom:2px solid #70747f"><div class="tab" style="left:0;width:71px"></div></div>
<div class="t bold" id="t_con" style="left:354px;top:555px;font-size:11.500px">Console</div>
<svg style="left:407px;top:555px" width="10" height="10"><path d="M1 1l7.500 7.500M8.500 1l-7.500 7.500" stroke="#333" stroke-width="1.200" fill="none"/></svg>
<div class="a" style="left:955px;top:560px;width:10px;height:2px;background:#444"></div>
<div class="a" style="left:350px;top:571px;width:621px;height:302px;background:#fff;border-left:1px solid #6f6f6f;border-bottom:1px solid #8a8a8a;border-right:1px solid #8b8f9a"></div>
<div class="a" style="left:351px;top:571px;width:602px;height:301px;overflow:hidden"><pre class="a" id="con" style="left:2px;top:-7.300px;font-family:'Liberation Sans',sans-serif;font-size:11px;line-height:14px;color:#111;word-spacing:0.350px;letter-spacing:-0.040px"><span id="c0">$25 = 5000.000    (homing seek, mm/min)</span>
<span id="c1" style="letter-spacing:-0.200px">$26 = 250    (homing debounce, msec)</span>
<span id="c2">$27 = 1.000    (homing pull-off, mm)</span>
<span id="c3">$28 = 740.000    (distance, mm)</span>
<span id="c4">$29 = 60.000    (vert.distance, mm)</span>
<span id="c5">$100 = 80.000    (x, step/mm)</span>
<span id="c6">$101 = 80.000    (y, step/mm)</span>
<span id="c7">$102 = 250.000    (z, step/mm)</span>
<span id="c8">$110 = 5000.000    (x max rate, mm/min)</span>
<span id="c9">$111 = 5000.000    (y max rate, mm/min)</span>
<span id="c10">$112 = 500.000    (z max rate, mm/min)</span>
<span id="c11">$120 = 15.000    (x accel, mm/sec^2)</span>
<span id="c12">$121 = 15.000    (y accel, mm/sec^2)</span>
<span id="c13">$122 = 10.000    (z accel, mm/sec^2)</span>
<span id="c14">$130 = 2000.000    (x max travel, mm)</span>
<span id="c15">$131 = 2000.000    (y max travel, mm)</span>
<span id="c16">$132 = 200.000    (z max travel, mm)</span>
<span id="c17">ok</span>
<span id="c18" style="letter-spacing:0.500px">&gt;&gt;&gt; $G</span>
<span id="c19" style="letter-spacing:-0.450px">[G0 G54 G17 G21 G90 G94 M0 M5 M9 T0 F0. S0.]</span>
<span id="c20">ok</span></pre></div>
<div class="a" style="left:953px;top:571px;width:17px;height:301px;background:#f0f0f0"></div>
<div class="a" style="left:954px;top:715px;width:15px;height:139px;background:#cdcdcd"></div>
<svg style="left:953px;top:571px" width="17" height="301" viewBox="953 571 17 301"><path d="M957.800 582.500l3.700-3.700 3.700 3.700" fill="none" stroke="#505050" stroke-width="1.700"/><path d="M957.800 862l3.700 3.700 3.700-3.700" fill="none" stroke="#505050" stroke-width="1.700"/></svg>
<div class="t" id="cmd" style="left:354.500px;top:881.500px;font-size:11px;letter-spacing:-0.450px">Command:</div>
<div class="a" style="left:410px;top:877px;width:557px;height:20px;background:#fff;border:1px solid #7a7a7a"></div>
<!-- Visualizer panel -->
<div class="panel" style="left:976px;top:95px;width:734px;height:808px"></div>
<div class="tabstrip" style="left:977px;top:96px;width:732px;height:20px;border-bottom:1px solid #8b8f9a"><div class="tab" style="left:0;width:79px"></div></div>
<div class="t bold" id="t_vis" style="left:981px;top:101px;font-size:11.500px">Visualizer</div>
<svg style="left:1042px;top:101px" width="10" height="10"><path d="M1 1l7.500 7.500M8.500 1l-7.500 7.500" stroke="#333" stroke-width="1.200" fill="none"/></svg>
<div class="a" style="left:1693px;top:106px;width:10px;height:2px;background:#444"></div>
<svg style="left:977px;top:116px" width="200" height="34" viewBox="977 116 200 34">
<defs><g id="cube" fill="none" stroke="#3d434b" stroke-width="1.300" stroke-linejoin="round"><path d="M12 0.500v6M12 6.500l-6.500 3.700v8l6.500 3.800 6.500-3.800v-8zM5.500 10.200l6.500 3.800 6.500-3.800M12 14v8M5.500 18.200L0.500 21M18.500 18.200L23.500 21"/></g></defs>
<use href="#cube" x="982" y="122.500"/><use href="#cube" x="1013" y="122.500"/><use href="#cube" x="1044" y="122.500"/><use href="#cube" x="1075" y="122.500"/>
<path d="M1018.500 132.700l6.500 3.800v8l-6.500-3.800z" fill="#7e838a"/>
<path d="M1062.500 132.700l-6.500 3.800v8l6.500-3.800z" fill="#7e838a"/>
<path d="M1087 129l-6.500 3.700 6.500 3.800 6.500-3.800z" fill="#7e838a"/>
<path d="M1105.500 119.500v27" stroke="#7c7c7c" stroke-width="1"/>
<path d="M1118 126.500c2-2 4.500-1 4 1.200 1.500-1.800 5-1.800 5.500 0.500 0.500 2-1.500 2.800-1.200 4.200 0.300 1.400 2 2 1.500 4.300-0.600 2.500-4.300 3.800-5.800 2.500-1.500-1.300 1.800-2.800 3-1.800M1118 126.500c-1.500 1.600 0.500 3.200-1 4.600-1.200 1.200-3.800 0.300-4.800 1.800-1 1.700 1.500 3.700 3.500 2.500 1.500-1 1-3 2.800-2.200 1.800 0.800 0 3.500 1.500 5.300" fill="none" stroke="#3d434b" stroke-width="1.100" stroke-linecap="round"/>
</svg>
<div class="a" id="canvas" style="left:977px;top:150px;width:732px;height:752px;background:#dceafd;border:1px solid #4a4a4a;overflow:hidden"></div>
<div class="a" style="left:1015px;top:175px;width:75px;height:65px;background:#5c5c5c"></div>
<div class="a" style="left:1015px;top:239px;width:75px;height:38px;background:#646464"></div>
<div class="a" style="left:1023px;top:181px;width:60px;height:52px;background:#d6d6d6"></div>
<div class="a" style="left:1023px;top:244px;width:60px;height:30px;background:#dedede"></div>
<div class="t" id="zp" style="left:1030.400px;top:191px;font-size:33px;color:#2e2e2e;letter-spacing:1px;transform:scaleX(1.140);transform-origin:left top">Z+</div>
<div class="t" id="ym" style="left:1034.300px;top:249px;font-size:26px;color:#2e2e2e;transform:scale(1.440,0.740);transform-origin:left top;letter-spacing:1px;-webkit-text-stroke:0.300px #2e2e2e">Y-</div>
<svg style="left:978px;top:151px;overflow:hidden" width="730" height="750" viewBox="978 151 730 750">
<rect x="1041.0" y="323.0" width="603.7" height="428.3" fill="#ccd9ec"/>
<rect x="1066.900" y="323.500" width="5.300" height="427.4" fill="#08d608"/>
<path d="M1041.90 323.0V751.3M1096.62 323.0V751.3M1123.98 323.0V751.3M1151.34 323.0V751.3M1178.70 323.0V751.3M1206.06 323.0V751.3M1233.42 323.0V751.3M1260.78 323.0V751.3M1288.14 323.0V751.3M1315.50 323.0V751.3M1342.86 323.0V751.3M1370.22 323.0V751.3M1397.58 323.0V751.3M1424.94 323.0V751.3M1452.30 323.0V751.3M1479.66 323.0V751.3M1507.02 323.0V751.3M1534.38 323.0V751.3M1561.74 323.0V751.3M1589.10 323.0V751.3M1616.46 323.0V751.3M1643.82 323.0V751.3M1041.0 324.00H1644.7M1041.0 347.69H1644.7M1041.0 371.38H1644.7M1041.0 395.07H1644.7M1041.0 418.76H1644.7M1041.0 442.45H1644.7M1041.0 466.14H1644.7M1041.0 489.83H1644.7M1041.0 513.52H1644.7M1041.0 537.21H1644.7M1041.0 560.90H1644.7M1041.0 584.59H1644.7M1041.0 608.28H1644.7M1041.0 631.97H1644.7M1041.0 655.66H1644.7M1041.0 679.35H1644.7M1041.0 703.04H1644.7M1041.0 726.73H1644.7M1041.0 750.42H1644.7" stroke="#a9a6a4" stroke-width="1.800" fill="none"/>
<g fill="none" stroke="#c6c612" stroke-width="0.950">
<path d="M1069.0 725.5L1579.0 342.0"/>
<path d="M1579.0 342.0L1561.0 349.0"/>
<path d="M1559.0 350.0L1560.4 391.0"/>
<path d="M1563.0 434.0L1566.0 487.0L1568.4 538.0L1569.0 552.0L1534.0 585.0L1480.0 641.0"/>
<path d="M1478.0 644.0L1408.0 624.5L1399.0 620.8"/>
<path d="M1390.0 622.0L1324.0 656.5"/>
<path d="M1267.0 586.0L1320.0 656.0"/>
<path d="M1188.0 620.0L1262.0 588.0"/>
<path d="M1108.0 510.0L1119.0 573.0L1186.0 620.0"/>
<path d="M1130.0 480.0L1158.0 453.0"/>
<path d="M1176.0 464.0L1398.0 432.0"/>
</g>
<g fill="none" stroke="#14149a" stroke-width="0.950" stroke-linejoin="round">
<path d="M1072.0 398.0C1071.8 396.3 1071.0 391.7 1071.0 388.0C1071.0 384.3 1071.2 379.3 1072.0 376.0C1072.8 372.7 1074.0 371.0 1076.0 368.0C1078.0 365.0 1080.7 361.3 1084.0 358.0C1087.3 354.7 1092.0 350.8 1096.0 348.0C1100.0 345.2 1104.3 343.0 1108.0 341.5C1111.7 340.0 1112.7 339.3 1118.0 338.8C1123.3 338.3 1136.3 338.6 1140.0 338.6L1560 338.6"/>
<path d="M1560.0 338.6C1562.0 338.6 1567.3 337.6 1572.0 338.8C1576.7 340.0 1582.7 342.5 1588.0 346.0C1593.3 349.5 1599.7 355.0 1604.0 360.0C1608.3 365.0 1612.1 371.3 1614.0 376.0C1615.9 380.7 1615.8 384.3 1615.6 388.0C1615.4 391.7 1614.6 394.7 1613.0 398.0C1611.4 401.3 1609.5 405.0 1606.0 408.0C1602.5 411.0 1594.8 414.0 1592.0 416.0C1589.2 418.0 1589.7 417.7 1589.0 420.0C1588.3 422.3 1588.0 427.0 1588.0 430.0C1588.0 433.0 1589.0 435.3 1589.0 438.0C1589.0 440.7 1588.8 443.0 1588.0 446.0C1587.2 449.0 1585.7 453.0 1584.0 456.0C1582.3 459.0 1579.7 462.0 1578.0 464.0C1576.3 466.0 1574.3 467.3 1573.6 468.0"/>
<path d="M1573.6 468.0C1575.0 469.3 1579.3 472.8 1582.0 476.0C1584.7 479.2 1587.0 483.7 1590.0 487.0C1593.0 490.3 1596.7 493.3 1600.0 496.0C1603.3 498.7 1607.5 500.7 1610.0 503.0C1612.5 505.3 1614.1 507.5 1615.0 510.0C1615.9 512.5 1616.1 515.3 1615.6 518.0C1615.1 520.7 1613.9 523.0 1612.0 526.0C1610.1 529.0 1606.2 532.7 1604.0 536.0C1601.8 539.3 1599.8 544.3 1599.0 546.0"/>
<path d="M1599.0 546.0C1599.7 547.0 1601.3 549.8 1603.0 552.0C1604.7 554.2 1607.2 555.7 1609.0 559.0C1610.8 562.3 1612.9 567.5 1614.0 572.0C1615.1 576.5 1615.8 581.3 1615.6 586.0C1615.4 590.7 1614.3 595.3 1613.0 600.0C1611.7 604.7 1610.2 609.3 1608.0 614.0C1605.8 618.7 1603.0 623.7 1600.0 628.0C1597.0 632.3 1593.7 635.8 1590.0 640.0C1586.3 644.2 1583.0 648.3 1578.0 653.0C1573.0 657.7 1568.0 662.5 1560.0 668.0C1552.0 673.5 1541.7 680.2 1530.0 686.0C1518.3 691.8 1503.3 698.2 1490.0 703.0C1476.7 707.8 1463.3 711.8 1450.0 715.0C1436.7 718.2 1420.2 720.4 1410.0 722.0C1399.8 723.6 1400.7 723.6 1389.0 724.4C1377.3 725.2 1356.3 726.9 1340.0 727.0C1323.7 727.1 1304.3 726.3 1291.0 725.0C1277.7 723.7 1271.8 721.5 1260.0 719.0C1248.2 716.5 1233.3 713.5 1220.0 710.0C1206.7 706.5 1191.7 702.3 1180.0 698.0C1168.3 693.7 1159.3 689.0 1150.0 684.0C1140.7 679.0 1132.3 673.7 1124.0 668.0C1115.7 662.3 1106.3 656.3 1100.0 650.0C1093.7 643.7 1089.5 635.3 1086.0 630.0C1082.5 624.7 1081.0 622.0 1079.0 618.0C1077.0 614.0 1075.2 610.0 1074.0 606.0C1072.8 602.0 1072.5 597.5 1072.0 594.0C1071.5 590.5 1071.0 588.3 1071.0 585.0C1071.0 581.7 1071.7 577.2 1072.0 574.0C1072.3 570.8 1072.0 568.7 1073.0 566.0C1074.0 563.3 1076.2 560.3 1078.0 558.0C1079.8 555.7 1082.4 554.2 1084.0 552.0C1085.6 549.8 1086.8 546.2 1087.4 545.0"/>
<path d="M1087.4 545.0C1086.8 543.7 1085.7 539.2 1084.0 537.0C1082.3 534.8 1079.0 533.7 1077.0 532.0C1075.0 530.3 1073.0 529.3 1072.0 527.0C1071.0 524.7 1071.0 521.0 1071.0 518.0C1071.0 515.0 1071.3 511.3 1072.0 509.0C1072.7 506.7 1073.0 506.5 1075.0 504.0C1077.0 501.5 1080.5 496.8 1084.0 494.0C1087.5 491.2 1093.5 489.3 1096.0 487.0C1098.5 484.7 1097.7 482.5 1099.0 480.0C1100.3 477.5 1102.2 474.6 1104.0 472.0C1105.8 469.4 1108.7 465.7 1109.6 464.4"/>
<path d="M1109.6 464.4C1108.3 463.3 1103.8 459.7 1102.0 458.0C1100.2 456.3 1099.7 455.7 1099.0 454.0C1098.3 452.3 1098.3 450.8 1098.0 448.0C1097.7 445.2 1097.3 440.7 1097.0 437.0C1096.7 433.3 1096.2 428.5 1096.0 426.0C1095.8 423.5 1096.3 423.8 1095.6 422.0C1094.9 420.2 1093.6 417.0 1092.0 415.0C1090.4 413.0 1088.2 411.2 1086.0 410.0C1083.8 408.8 1080.8 408.6 1079.0 407.6C1077.2 406.6 1076.2 405.6 1075.0 404.0C1073.8 402.4 1072.5 399.0 1072.0 398.0"/>
<path d="M1148.0 349.6C1143.7 349.9 1128.2 350.8 1122.0 351.4C1115.8 352.0 1114.7 351.9 1111.0 353.0C1107.3 354.1 1103.5 355.5 1100.0 358.0C1096.5 360.5 1092.7 364.3 1090.0 368.0C1087.3 371.7 1085.2 376.7 1084.0 380.0C1082.8 383.3 1082.8 385.3 1083.0 388.0C1083.2 390.7 1084.0 393.8 1085.0 396.0C1086.0 398.2 1087.7 399.6 1089.0 401.0C1090.3 402.4 1091.2 403.7 1093.0 404.4C1094.8 405.1 1098.8 404.9 1100.0 405.0L1200 405.6C1201.3 405.7 1205.7 406.3 1208.0 406.0C1210.3 405.7 1213.0 404.3 1214.0 404.0L1241 383C1241.6 382.7 1243.1 381.0 1244.4 381.0C1245.7 381.0 1248.2 382.7 1249.0 383.0L1278 405L1406 405.4L1435 383C1435.5 382.7 1436.7 380.9 1438.0 381.0C1439.3 381.1 1442.2 383.1 1443.0 383.5L1471 406L1575 405.6C1577.3 405.6 1585.5 405.8 1589.0 405.4C1592.5 405.0 1594.2 404.2 1596.0 403.0C1597.8 401.8 1599.0 400.5 1600.0 398.0C1601.0 395.5 1601.8 391.3 1602.0 388.0C1602.2 384.7 1602.0 381.3 1601.0 378.0C1600.0 374.7 1598.5 371.3 1596.0 368.0C1593.5 364.7 1589.7 360.5 1586.0 358.0C1582.3 355.5 1578.0 354.2 1574.0 353.0C1570.0 351.8 1567.7 351.1 1562.0 350.6C1556.3 350.1 1543.7 350.3 1540.0 350.2L1148 349.6"/>
<path d="M1198 420L1124 419.6C1122.7 420.0 1118.2 420.6 1116.0 422.0C1113.8 423.4 1112.1 425.3 1111.0 428.0C1109.9 430.7 1109.6 434.7 1109.6 438.0C1109.6 441.3 1110.1 445.7 1111.0 448.0C1111.9 450.3 1113.2 451.1 1115.0 452.0C1116.8 452.9 1120.8 453.0 1122.0 453.2L1150 453.4L1167 467L1325 466.5"/>
<path d="M1198 420L1160 451L1150 453.4"/>
<path d="M1323 465.5L1246.4 398.4L1180 454C1179.4 454.8 1176.8 457.2 1176.5 459.0C1176.2 460.8 1177.8 463.7 1178.0 464.6"/>
<path d="M1295 420L1390 420L1352 452.4L1336 453C1335.3 452.9 1333.2 452.9 1332.0 452.4C1330.8 451.9 1329.5 450.4 1329.0 450.0L1295 420"/>
<path d="M1517 465.6L1439 398.4L1366 462C1365.6 462.5 1363.5 464.2 1363.5 465.0C1363.5 465.8 1365.6 466.7 1366.0 467.0L1510 467L1517 465.6"/>
<path d="M1487 420L1562 420C1563.3 420.3 1567.8 420.3 1570.0 422.0C1572.2 423.7 1574.0 427.3 1575.0 430.0C1576.0 432.7 1576.2 435.0 1576.0 438.0C1575.8 441.0 1575.2 445.6 1574.0 448.0C1572.8 450.4 1571.0 451.5 1569.0 452.4C1567.0 453.3 1563.2 453.2 1562.0 453.4L1527 453.4L1524 452L1487 420"/>
<path d="M1098.0 505.0C1099.0 503.5 1101.3 499.0 1104.0 496.0C1106.7 493.0 1111.0 489.4 1114.0 487.0C1117.0 484.6 1120.7 482.5 1122.0 481.6"/>
<path d="M1122.0 481.6C1121.7 482.3 1121.2 484.1 1120.0 486.0C1118.8 487.9 1115.3 490.8 1115.0 493.0C1114.7 495.2 1115.8 496.8 1118.0 499.0C1120.2 501.2 1124.3 504.2 1128.0 506.0C1131.7 507.8 1136.7 509.8 1140.0 510.0C1143.3 510.2 1144.7 509.0 1148.0 507.0C1151.3 505.0 1156.0 500.5 1160.0 498.0C1164.0 495.5 1168.3 493.3 1172.0 492.0C1175.7 490.7 1178.7 490.1 1182.0 490.4C1185.3 490.7 1188.3 491.7 1192.0 494.0C1195.7 496.3 1200.7 501.3 1204.0 504.0C1207.3 506.7 1209.3 508.8 1212.0 510.0C1214.7 511.2 1217.0 511.5 1220.0 511.0C1223.0 510.5 1226.0 509.5 1230.0 507.0C1234.0 504.5 1239.8 498.8 1244.0 496.0C1248.2 493.2 1252.3 491.6 1255.0 490.5C1257.7 489.4 1258.5 489.6 1260.0 489.6C1261.5 489.6 1260.7 488.7 1264.0 490.4C1267.3 492.1 1275.0 496.7 1280.0 500.0C1285.0 503.3 1290.3 507.9 1294.0 510.0C1297.7 512.1 1299.0 512.9 1302.0 512.4C1305.0 511.9 1307.7 509.7 1312.0 507.0C1316.3 504.3 1323.3 498.7 1328.0 496.0C1332.7 493.3 1337.5 491.6 1340.0 490.6C1342.5 489.6 1340.3 489.3 1343.0 490.0C1345.7 490.7 1351.8 492.5 1356.0 495.0C1360.2 497.5 1364.7 502.4 1368.0 505.0C1371.3 507.6 1373.3 509.4 1376.0 510.4C1378.7 511.4 1381.0 511.6 1384.0 511.0C1387.0 510.4 1390.0 509.3 1394.0 507.0C1398.0 504.7 1403.5 499.8 1408.0 497.0C1412.5 494.2 1417.8 491.3 1421.0 490.0C1424.2 488.7 1425.0 489.0 1427.0 489.0C1429.0 489.0 1430.5 488.8 1433.0 490.0C1435.5 491.2 1438.5 493.3 1442.0 496.0C1445.5 498.7 1450.7 503.5 1454.0 506.0C1457.3 508.5 1459.3 510.1 1462.0 511.0C1464.7 511.9 1467.3 512.1 1470.0 511.4C1472.7 510.7 1475.0 509.2 1478.0 507.0C1481.0 504.8 1484.3 500.5 1488.0 498.0C1491.7 495.5 1496.3 493.3 1500.0 492.0C1503.7 490.7 1506.3 489.5 1510.0 490.0C1513.7 490.5 1518.2 492.8 1522.0 495.0C1525.8 497.2 1530.3 500.7 1533.0 503.0C1535.7 505.3 1535.7 507.6 1538.0 509.0C1540.3 510.4 1544.0 511.6 1547.0 511.6C1550.0 511.6 1552.8 510.6 1556.0 509.0C1559.2 507.4 1563.3 504.5 1566.0 502.0C1568.7 499.5 1570.6 496.3 1572.0 494.0C1573.4 491.7 1574.2 489.8 1574.4 488.0C1574.6 486.2 1573.7 484.2 1573.0 483.0C1572.3 481.8 1572.2 481.3 1570.0 481.0C1567.8 480.7 1561.7 481.0 1560.0 481.0L1485 481L1484 480L1130 480"/>
<path d="M1108.0 510.0C1110.0 510.8 1116.3 513.5 1120.0 515.0C1123.7 516.5 1126.7 518.0 1130.0 519.0C1133.3 520.0 1136.3 520.9 1140.0 521.0C1143.7 521.1 1148.7 520.4 1152.0 519.6C1155.3 518.8 1157.7 517.6 1160.0 516.0C1162.3 514.4 1163.7 511.6 1166.0 510.0C1168.3 508.4 1171.7 506.9 1174.0 506.4C1176.3 505.9 1177.3 506.1 1180.0 507.0C1182.7 507.9 1186.3 509.7 1190.0 512.0C1193.7 514.3 1198.3 518.5 1202.0 521.0C1205.7 523.5 1209.0 525.8 1212.0 527.0C1215.0 528.2 1217.0 528.7 1220.0 528.4C1223.0 528.1 1226.3 527.2 1230.0 525.0C1233.7 522.8 1238.0 518.0 1242.0 515.0C1246.0 512.0 1250.7 508.5 1254.0 507.0C1257.3 505.5 1259.7 505.8 1262.0 506.0C1264.3 506.2 1265.7 506.5 1268.0 508.0C1270.3 509.5 1272.7 512.5 1276.0 515.0C1279.3 517.5 1284.0 521.0 1288.0 523.0C1292.0 525.0 1296.7 526.4 1300.0 527.0C1303.3 527.6 1305.0 527.3 1308.0 526.6C1311.0 525.9 1314.3 525.3 1318.0 523.0C1321.7 520.7 1326.3 515.7 1330.0 513.0C1333.7 510.3 1338.0 508.1 1340.0 507.0C1342.0 505.9 1340.0 506.1 1342.0 506.4C1344.0 506.7 1348.7 507.1 1352.0 509.0C1355.3 510.9 1358.7 515.2 1362.0 518.0C1365.3 520.8 1368.7 524.4 1372.0 526.0C1375.3 527.6 1378.0 528.1 1382.0 527.6C1386.0 527.1 1391.3 525.4 1396.0 523.0C1400.7 520.6 1405.7 516.1 1410.0 513.0C1414.3 509.9 1420.0 505.8 1422.0 504.4"/>
<path d="M1422.0 504.4C1424.0 505.5 1430.0 508.4 1434.0 511.0C1438.0 513.6 1442.3 517.5 1446.0 520.0C1449.7 522.5 1452.7 524.7 1456.0 526.0C1459.3 527.3 1462.3 528.3 1466.0 528.0C1469.7 527.7 1474.0 526.2 1478.0 524.0C1482.0 521.8 1486.0 517.7 1490.0 515.0C1494.0 512.3 1498.3 509.4 1502.0 508.0C1505.7 506.6 1509.0 506.2 1512.0 506.4C1515.0 506.6 1517.3 507.1 1520.0 509.0C1522.7 510.9 1525.0 515.3 1528.0 518.0C1531.0 520.7 1534.7 523.4 1538.0 525.0C1541.3 526.6 1544.3 527.6 1548.0 527.4C1551.7 527.2 1555.7 525.9 1560.0 524.0C1564.3 522.1 1569.7 519.1 1574.0 516.0C1578.3 512.9 1582.7 507.3 1586.0 505.6C1589.3 503.9 1591.7 504.9 1594.0 505.6C1596.3 506.3 1598.8 507.9 1600.0 510.0C1601.2 512.1 1601.7 515.3 1601.4 518.0C1601.1 520.7 1599.9 523.5 1598.0 526.0C1596.1 528.5 1593.0 531.3 1590.0 533.0C1587.0 534.7 1583.3 535.6 1580.0 536.0C1576.7 536.4 1574.2 535.7 1570.0 535.6C1565.8 535.5 1557.5 535.6 1555.0 535.6L1489 535L1488 536L1345 536.4"/>
<path d="M1268 536L1130 535.6C1128.7 535.5 1124.7 534.9 1122.0 535.0C1119.3 535.1 1117.0 536.3 1114.0 536.4C1111.0 536.5 1107.3 536.5 1104.0 535.6C1100.7 534.7 1097.0 532.9 1094.0 531.0C1091.0 529.1 1088.0 526.5 1086.0 524.0C1084.0 521.5 1082.3 518.3 1082.0 516.0C1081.7 513.7 1082.7 511.6 1084.0 510.0C1085.3 508.4 1087.7 507.2 1090.0 506.4C1092.3 505.6 1096.7 505.2 1098.0 505.0"/>
<path d="M1120.0 552.0C1118.0 552.2 1111.7 552.3 1108.0 553.0C1104.3 553.7 1101.0 554.5 1098.0 556.0C1095.0 557.5 1092.0 560.0 1090.0 562.0C1088.0 564.0 1087.1 565.3 1086.0 568.0C1084.9 570.7 1084.1 574.3 1083.6 578.0C1083.1 581.7 1082.8 586.0 1083.0 590.0C1083.2 594.0 1084.0 598.0 1085.0 602.0C1086.0 606.0 1087.3 610.0 1089.0 614.0C1090.7 618.0 1092.8 622.3 1095.0 626.0C1097.2 629.7 1098.8 632.3 1102.0 636.0C1105.2 639.7 1110.0 644.7 1114.0 648.0C1118.0 651.3 1120.0 652.3 1126.0 656.0C1132.0 659.7 1141.0 665.0 1150.0 670.0C1159.0 675.0 1170.7 681.8 1180.0 686.0C1189.3 690.2 1197.0 692.2 1206.0 695.0C1215.0 697.8 1225.0 700.7 1234.0 703.0C1243.0 705.3 1251.0 707.3 1260.0 709.0C1269.0 710.7 1278.7 712.0 1288.0 713.0C1297.3 714.0 1307.3 714.6 1316.0 715.0C1324.7 715.4 1331.0 715.8 1340.0 715.6C1349.0 715.4 1358.3 715.1 1370.0 714.0C1381.7 712.9 1396.7 711.0 1410.0 709.0C1423.3 707.0 1436.7 705.0 1450.0 702.0C1463.3 699.0 1476.7 695.7 1490.0 691.0C1503.3 686.3 1518.3 680.0 1530.0 674.0C1541.7 668.0 1552.3 660.7 1560.0 655.0C1567.7 649.3 1571.3 645.0 1576.0 640.0C1580.7 635.0 1584.7 629.7 1588.0 625.0C1591.3 620.3 1593.8 616.2 1596.0 612.0C1598.2 607.8 1599.8 604.0 1601.0 600.0C1602.2 596.0 1602.8 591.7 1603.0 588.0C1603.2 584.3 1602.8 581.3 1602.0 578.0C1601.2 574.7 1600.0 571.2 1598.0 568.0C1596.0 564.8 1593.0 561.3 1590.0 559.0C1587.0 556.7 1583.7 555.2 1580.0 554.0C1576.3 552.8 1573.0 552.3 1568.0 552.0C1563.0 551.7 1553.0 552.0 1550.0 552.0L1364 552L1361 551L1358 552L1120 552"/>
<ellipse cx="1122.0" cy="586.0" rx="14" ry="12.8"/>
<ellipse cx="1190.2" cy="633.0" rx="14" ry="12.8"/>
<ellipse cx="1273.0" cy="597.8" rx="14" ry="12.8"/>
<ellipse cx="1327.8" cy="669.0" rx="14" ry="12.8"/>
<ellipse cx="1397.2" cy="633.4" rx="14" ry="12.8"/>
<ellipse cx="1479.3" cy="657.2" rx="14" ry="12.8"/>
<path d="M1536 577A14 12.800 0 1 1 1536 592.500"/>
</g>
<rect x="1042.4" y="725" width="601.4" height="4.700" fill="#e00202"/>
<defs><linearGradient id="cg" x1="0" x2="1"><stop offset="0" stop-color="#d6d6d6"/><stop offset="0.450" stop-color="#ececec"/><stop offset="1" stop-color="#cfcfcf"/></linearGradient><radialGradient id="dg" cx="0.550" cy="0.450" r="0.650"><stop offset="0" stop-color="#fbfbfb"/><stop offset="0.600" stop-color="#f0f0f0"/><stop offset="1" stop-color="#dddddd"/></radialGradient></defs>
<path d="M1061.300 702l7.500 23.600h1.400l7.300-23.600z" fill="url(#cg)"/>
<path d="M1069.500 688c5.500 0 9.500 3.500 9.500 8.500c0 2.500-0.900 5-2.200 7c-2 1.200-4.500 1.800-7.300 1.800s-5.300-0.600-7.300-1.800c-1.300-2-2.300-4.500-2.300-7c0-5 4.100-8.500 9.600-8.500z" fill="url(#dg)"/>
<g stroke="#7c7977" stroke-width="1.700" fill="none"><path d="M1020 338V727M1003 338H1036.500M1004 727H1037"/><path d="M1069 769.500H1617M1069 755V783.600M1617 755V783.600"/><path d="M1649 727H1682"/></g>
<text x="1343" y="783.800" font-family="Liberation Sans, sans-serif" font-size="21" fill="#808080" text-anchor="middle" transform="translate(0 783.800) scale(1 0.860) translate(0 -783.800)" id="d61">61.03 mm</text>
<text x="0" y="0" font-family="Liberation Sans, sans-serif" font-size="22.500" fill="#808080" text-anchor="middle" transform="translate(1018.600 531.500) rotate(-90) scale(0.810 1)" id="d50">50.08 mm</text>
<text x="1668" y="733.500" font-family="Liberation Sans, sans-serif" font-size="21" fill="#808080" transform="translate(0 733.500) scale(1 0.860) translate(0 -733.500)">0 mm</text>
<text x="1701" y="895.500" font-family="Liberation Sans, sans-serif" font-size="12.300" font-weight="bold" fill="#ffffff" text-anchor="end" id="fps">FPS: 11.63</text>
</svg>
<!-- status bar -->
<div class="t" id="s1" style="left:1090px;top:912.500px;font-size:11px;letter-spacing:-0.100px">Step size: 10.0mm</div>
<div class="t" id="s2" style="left:1195.500px;top:912.500px;font-size:11px;letter-spacing:-0.130px">hamburger_complex.gcode</div>
<div class="a" style="left:1343px;top:907px;width:26px;height:22px;background:#808080;border-radius:3px"></div>
<div class="t" id="s3" style="left:1343px;width:26px;text-align:center;top:912.500px;font-size:11px;color:#1a1a1a">Idle</div>
<div class="t" id="s4" style="left:1382.500px;top:912.500px;font-size:11px;letter-spacing:-0.100px">Loaded File: 655 rows</div>
<div class="t" id="s5" style="left:1542.500px;top:912.500px;font-size:11px">1:1</div>
<div class="t" id="s6" style="left:1608px;top:912.500px;font-size:11px;letter-spacing:-0.300px">INS</div>
<div class="t" id="s7" style="left:1630.500px;top:912.500px;font-size:11px;letter-spacing:-0.380px">Windows (CRLF)</div>
<svg style="left:1180px;top:905px" width="460" height="26" viewBox="1180 905 460 26"><path d="M1187.500 911v14M1334.500 911v14M1377.500 907v21.500M1493.500 911v14M1604.500 911v14M1628.500 911v14" stroke="#a0a0a0" stroke-width="1"/></svg>
</body>
</html>
